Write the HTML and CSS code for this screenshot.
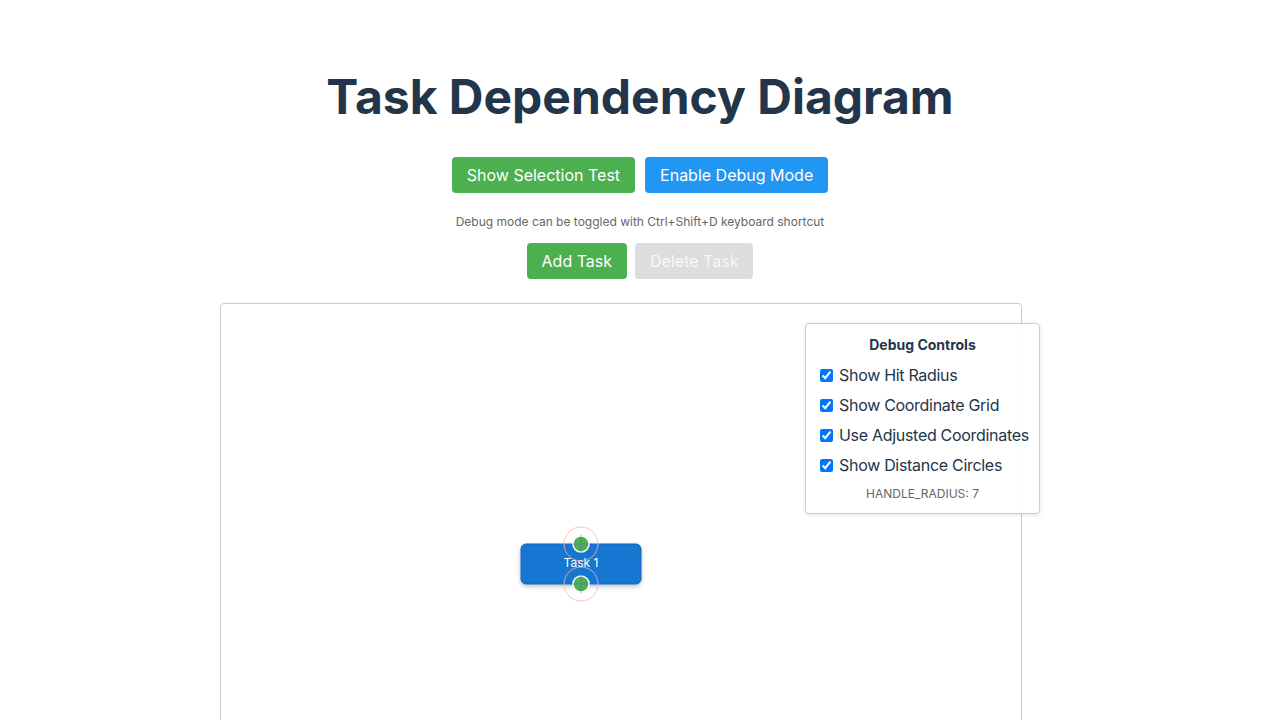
FILE: index.html
```html
<!DOCTYPE html>
<html>
<head>
<meta charset="utf-8">
<link rel="stylesheet" href="styles.css">
</head>
<body>
<div class="app">
  <h1 class="title">Task Dependency Diagram</h1>
  <div class="btn-row top-row">
    <button class="btn btn-green">Show Selection Test</button>
    <button class="btn btn-blue">Enable Debug Mode</button>
  </div>
  <p class="hint">Debug mode can be toggled with Ctrl+Shift+D keyboard shortcut</p>
  <div class="btn-row tool-row">
    <button class="btn btn-green">Add Task</button>
    <button class="btn btn-disabled" disabled>Delete Task</button>
  </div>
  <div class="canvas-wrap">
    <div class="canvas">
      <svg class="diagram" width="800" height="600" viewBox="0 0 800 600">
        <defs>
          <filter id="sh" x="-20%" y="-40%" width="140%" height="180%">
            <feDropShadow dx="0" dy="2" stdDeviation="2" flood-color="#000" flood-opacity="0.25"/>
          </filter>
        </defs>
        <rect x="300" y="240" width="120" height="40" rx="5" fill="#1976D2" stroke="#1565C0" stroke-width="1" filter="url(#sh)"/>
        <text x="360" y="263" text-anchor="middle" class="node-label">Task 1</text>
        <circle cx="360" cy="240" r="17" fill="none" stroke="#f8b4b4" stroke-width="1" opacity="0.8"/>
        <circle cx="360" cy="280" r="17" fill="none" stroke="#f8b4b4" stroke-width="1" opacity="0.8"/>
        <circle cx="360" cy="240" r="8" fill="#4CAF50" stroke="#fff" stroke-width="1.5"/>
        <circle cx="360" cy="280" r="8" fill="#4CAF50" stroke="#fff" stroke-width="1.5"/>
        <g stroke="#5c6bc0" stroke-width="1" opacity="0.55">
          <line x1="360" y1="231" x2="360" y2="249"/>
          <line x1="352" y1="240" x2="368" y2="240"/>
          <line x1="360" y1="271" x2="360" y2="289"/>
          <line x1="352" y1="280" x2="368" y2="280"/>
        </g>
      </svg>
    </div>
    <div class="debug-panel">
      <div class="debug-title">Debug Controls</div>
      <label class="debug-row"><input type="checkbox" checked> Show Hit Radius</label>
      <label class="debug-row"><input type="checkbox" checked> Show Coordinate Grid</label>
      <label class="debug-row"><input type="checkbox" checked> Use Adjusted Coordinates</label>
      <label class="debug-row"><input type="checkbox" checked> Show Distance Circles</label>
      <div class="debug-info">HANDLE_RADIUS: 7</div>
    </div>
  </div>
</div>
</body>
</html>
```
FILE: styles.css
```css
html, body {
  margin: 0;
  padding: 0;
  background: #fff;
}
body {
  font-family: Inter, "Noto Sans", "Liberation Sans", sans-serif;
  color: #2c3e50;
}
.app {
  display: flex;
  flex-direction: column;
  align-items: center;
  padding-top: 68px;
}
.title {
  margin: 0;
  font-size: 48px;
  line-height: 58px;
  font-weight: 700;
  color: #22354b;
  letter-spacing: 0;
}
.btn-row {
  display: flex;
  gap: 10px;
  justify-content: center;
}
.top-row {
  margin-top: 31px;
}
.btn {
  height: 36px;
  padding: 0 15px;
  border: none;
  border-radius: 4px;
  font-family: inherit;
  font-size: 16px;
  color: #fff;
  white-space: nowrap;
  cursor: pointer;
}
.btn-green {
  background: #4CAF50;
}
.btn-blue {
  background: #2196F3;
}
.btn-disabled {
  background: #dddddd;
  color: #f7f7f7;
}
.hint {
  margin: 21px 0 0;
  font-size: 12px;
  line-height: 15px;
  color: #666;
}
.tool-row {
  margin-top: 14px;
  gap: 8px;
}
.canvas-wrap {
  position: relative;
  align-self: flex-start;
  margin-left: 220px;
  margin-top: 24px;
}
.canvas {
  width: 800px;
  height: 600px;
  border: 1px solid #ccc;
  border-radius: 4px;
  background: #fff;
}
.diagram {
  display: block;
}
.node-label {
  font-family: Inter, "Liberation Sans", sans-serif;
  font-size: 12px;
  fill: #fff;
}
.debug-panel {
  position: absolute;
  left: 585px;
  top: 20px;
  width: 213px;
  padding: 12px 10px 12px 10px;
  background: rgba(255, 255, 255, 0.92);
  border: 1px solid #ccc;
  border-radius: 4px;
  box-shadow: 0 1px 4px rgba(0, 0, 0, 0.12);
  display: flex;
  flex-direction: column;
}
.debug-title {
  font-size: 14px;
  font-weight: 700;
  text-align: center;
  line-height: 18px;
  margin-bottom: 6px;
  color: #22354b;
}
.debug-row {
  display: flex;
  align-items: center;
  gap: 6px;
  height: 30px;
  font-size: 16px;
  letter-spacing: -0.3px;
  white-space: nowrap;
  color: #22354b;
}
.debug-row input {
  margin: 0 0 0 4px;
  width: 13px;
  height: 13px;
  flex: none;
  accent-color: #0075ff;
}
.debug-info {
  margin-top: 6px;
  font-size: 12px;
  line-height: 15px;
  text-align: center;
  color: #666;
}
```
